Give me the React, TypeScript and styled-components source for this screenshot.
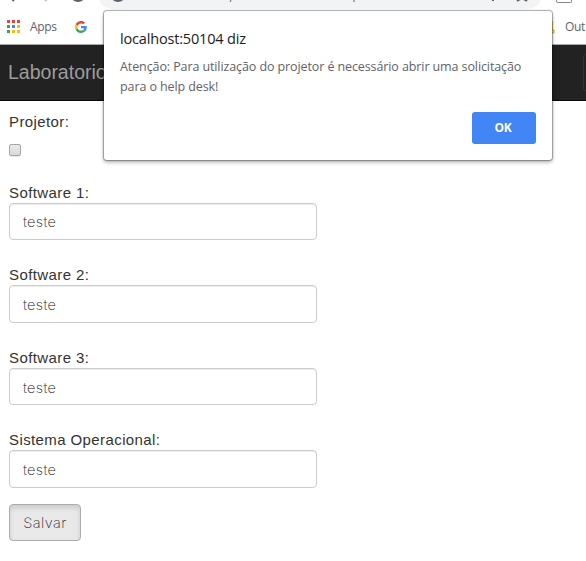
import React from "react";
import styled, { createGlobalStyle } from "styled-components";

const GlobalStyle = createGlobalStyle`
  * { box-sizing: border-box; }
  html, body { margin: 0; background: #fff; overflow: hidden; }
`;

const Page = styled.div`
  position: relative;
  width: 586px;
  height: 561px;
  overflow: hidden;
  background: #fff;
  font-family: "Liberation Sans", Arial, sans-serif;
  color: #333;
`;

const Toolbar = styled.div`
  display: flex;
  align-items: flex-start;
  height: 10px;
  overflow: hidden;
`;

const NavIcons = styled.svg`
  flex: none;
  width: 100px;
  height: 10px;
`;

const AddressBar = styled.div`
  flex: none;
  width: 440px;
  height: 9px;
  border-radius: 0 0 14px 14px / 0 0 9px 9px;
  background: #f1f3f4;
  svg { display: block; }
`;

const Extension = styled.div`
  width: 16px;
  height: 3px;
  margin-left: 16px;
  border: 1px solid #85888c;
  border-top: 0;
  border-radius: 0 0 2px 2px;
`;

const Bookmarks = styled.div`
  display: flex;
  align-items: center;
  height: 35px;
  padding: 0 0 1px 7px;
  border-bottom: 1px solid #aaa;
  font: 12px "Open Sans", "Noto Sans", sans-serif;
  color: #5f6368;
  white-space: nowrap;
  svg { flex: none; }
`;

const BookmarkText = styled.span<{ $left: number; $width: number }>`
  flex: none;
  margin-left: ${(p) => p.$left}px;
  width: ${(p) => p.$width}px;
  letter-spacing: -0.3px;
`;

const Folder = styled.svg`
  margin-left: 450px;
`;

const Navbar = styled.nav`
  display: flex;
  align-items: center;
  justify-content: space-between;
  height: 56px;
  padding-left: 8px;
  background: #222;
  border-bottom: 1px solid #080808;
  color: #9d9d9d;
  font-size: 19.5px;
`;

const Toggle = styled.div`
  width: 3px;
  height: 37px;
  border: 1px solid #333;
  border-right: 0;
  border-radius: 4px 0 0 4px;
`;

const Form = styled.form`
  display: flex;
  flex-direction: column;
  align-items: flex-start;
  padding: 11px 9px 0;
`;

const Label = styled.label`
  height: 20px;
  line-height: 20px;
  font-size: 15px;
  letter-spacing: 0.4px;
  white-space: nowrap;
`;

const Checkbox = styled.span`
  width: 12px;
  height: 12px;
  margin: 12px 0 26.6px;
  border: 1px solid #a6a6a6;
  border-radius: 2px;
  background: linear-gradient(#eaeaea, #d9d9d9);
  box-shadow: 0 1px 1px rgba(0, 0, 0, 0.1);
`;

const Field = styled.div`
  display: flex;
  flex-direction: column;
  height: 82.6px;
`;

const TextInput = styled.input`
  width: 308px;
  height: 37.5px;
  margin: 0;
  padding: 1px 13px 0;
  border: 1px solid #ccc;
  border-radius: 4px;
  background: #fff;
  box-shadow: inset 0 1px 1px rgba(0, 0, 0, 0.075);
  color: #222;
  font: 200 14.5px Inter, Roboto, sans-serif;
  letter-spacing: 0.3px;
  outline: 0;
`;

const SaveButton = styled.button`
  width: 72px;
  height: 37px;
  margin-top: -9px;
  padding: 1px 0 0;
  border: 1px solid #adadad;
  border-radius: 4px;
  background: #e9e9e9;
  box-shadow: inset 0 3px 5px rgba(0, 0, 0, 0.125);
  color: #222;
  font: 200 14.5px Inter, Roboto, sans-serif;
  letter-spacing: 0.5px;
`;

const Dialog = styled.section`
  position: absolute;
  left: 104px;
  top: 11px;
  display: flex;
  flex-direction: column;
  width: 448px;
  height: 149px;
  padding: 18px 16px 16px;
  border-radius: 3px;
  background: #fff;
  box-shadow: 0 0 1px 1px rgba(0, 0, 0, 0.3), 0 2px 4px rgba(0, 0, 0, 0.35);
  font-family: "Open Sans", "Noto Sans", sans-serif;
`;

const DialogTitle = styled.h1`
  margin: 0 0 8px;
  color: #202124;
  font-size: 14.5px;
  line-height: 20px;
  font-weight: 400;
  letter-spacing: -0.17px;
`;

const Message = styled.p`
  margin: 0;
  color: #5f6368;
  font-size: 12.5px;
  line-height: 20px;
  letter-spacing: -0.1px;
  white-space: nowrap;
`;

const OkButton = styled.button`
  align-self: flex-end;
  width: 64px;
  height: 32px;
  margin-top: auto;
  padding: 0 2px 2px 0;
  border: 0;
  border-radius: 3px;
  background: #4285f4;
  color: #fff;
  font: 700 12px "Open Sans", "Noto Sans", sans-serif;
  letter-spacing: -0.3px;
`;

const appColors = ["#ea4335", "#ea4335", "#ea4335", "#34a853", "#4285f4", "#fbbc05", "#34a853", "#fbbc05", "#fbbc05"];

const fields = ["Software 1:", "Software 2:", "Software 3:", "Sistema Operacional:"];

export default function App() {
  return (
    <Page>
      <GlobalStyle />
      <Toolbar>
        <NavIcons viewBox="0 0 100 10" fill="none" strokeWidth="2">
          <path d="M10-3l4 4" stroke="#5f6368" />
          <path d="M49-3l-4 4" stroke="#bdc1c6" />
          <path d="M73-1q5 4 10 0" stroke="#5f6368" />
        </NavIcons>
        <AddressBar>
          <svg width="440" height="9" fill="none" stroke="#5f6368" strokeWidth="2">
            <path d="M13-1q5 4 10 0" />
            <path d="M131 0l-1 2M254 0v2" strokeWidth="1" />
            <path d="M393-1v2M417 1l5-3 5 3" />
          </svg>
        </AddressBar>
        <Extension />
      </Toolbar>
      <Bookmarks>
        <svg width="13" height="13">
          {appColors.map((color, i) => (
            <rect key={i} x={(i % 3) * 5} y={Math.floor(i / 3) * 5} width="3" height="3" fill={color} />
          ))}
        </svg>
        <BookmarkText $left={10} $width={45}>Apps</BookmarkText>
        <svg width="12" height="12" viewBox="0 0 48 48">
          <path fill="#EA4335" d="M24 9.5c3.54 0 6.71 1.22 9.21 3.6l6.85-6.85C35.9 2.38 30.47 0 24 0 14.62 0 6.51 5.38 2.56 13.22l7.98 6.19C12.43 13.72 17.74 9.5 24 9.5z" />
          <path fill="#4285F4" d="M46.98 24.55c0-1.57-.15-3.09-.38-4.55H24v9.02h12.94c-.58 2.96-2.26 5.48-4.78 7.18l7.73 6c4.51-4.18 7.09-10.36 7.09-17.65z" />
          <path fill="#FBBC05" d="M10.53 28.59c-.48-1.45-.76-2.99-.76-4.59s.27-3.14.76-4.59l-7.98-6.19C.92 16.46 0 20.12 0 24s.92 7.54 2.56 10.78l7.97-6.19z" />
          <path fill="#34A853" d="M24 48c6.48 0 11.93-2.13 15.89-5.81l-7.73-6c-2.15 1.45-4.92 2.3-8.16 2.3-6.26 0-11.57-4.22-13.47-9.91l-7.98 6.19C6.51 42.62 14.62 48 24 48z" />
        </svg>
        <Folder width="18" height="14">
          <path d="M1 1h15v9h1v3H1z" fill="#eccb5b" />
          <path d="M14 10h3v3h-3z" fill="#f7dc7b" stroke="#d9b23d" />
        </Folder>
        <BookmarkText $left={10} $width={21}>Out</BookmarkText>
      </Bookmarks>
      <Navbar>
        <span>Laboratorio</span>
        <Toggle />
      </Navbar>
      <Form>
        <Label>Projetor:</Label>
        <Checkbox role="checkbox" aria-checked={false} />
        {fields.map((label) => (
          <Field key={label}>
            <Label>{label}</Label>
            <TextInput defaultValue="teste" aria-label={label} />
          </Field>
        ))}
        <SaveButton type="button">Salvar</SaveButton>
      </Form>
      <Dialog role="alertdialog">
        <DialogTitle>localhost:50104 diz</DialogTitle>
        <Message>
          Atenção: Para utilização do projetor é necessário abrir uma solicitação
          <br />
          para o help desk!
        </Message>
        <OkButton>OK</OkButton>
      </Dialog>
    </Page>
  );
}
